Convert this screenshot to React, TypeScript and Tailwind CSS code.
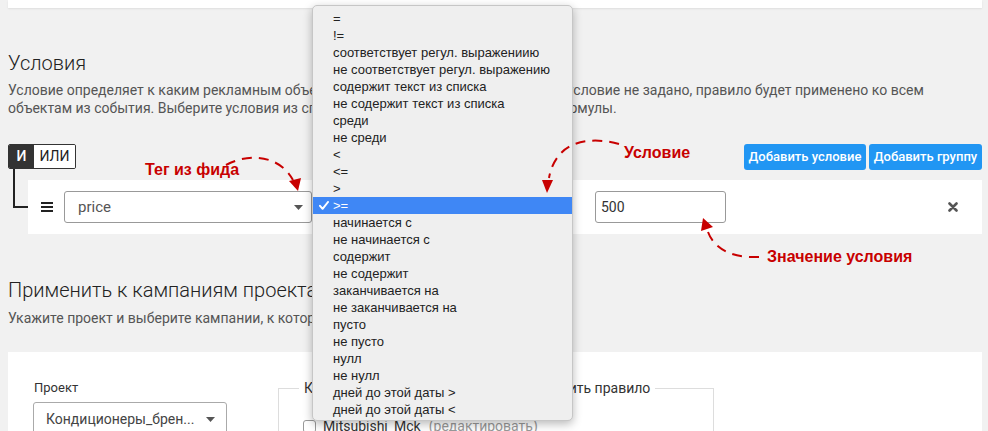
import React from 'react'

const operators = [
  '=',
  '!=',
  'соответствует регул. выражениию',
  'не соответствует регул. выражению',
  'содержит текст из списка',
  'не содержит текст из списка',
  'среди',
  'не среди',
  '<',
  '<=',
  '>',
  '>=',
  'начинается с',
  'не начинается с',
  'содержит',
  'не содержит',
  'заканчивается на',
  'не заканчивается на',
  'пусто',
  'не пусто',
  'нулл',
  'не нулл',
  'дней до этой даты >',
  'дней до этой даты <',
]

const Caret = () => (
  <svg width="9" height="5" viewBox="0 0 9 5" className="shrink-0">
    <path d="M0 0h9L4.5 5z" fill="#555" />
  </svg>
)

// выпадающий список операторов (открыт)
const OperatorMenu = ({ selected }: { selected: string }) => (
  <div className="absolute left-[312px] top-[5px] z-20 w-[261px] h-[416px] rounded-[5px] border border-[#c6c6c6] bg-[#efefef] pt-[4px] shadow-[0_3px_10px_rgba(0,0,0,0.28)] font-['Liberation_Sans',Arial,sans-serif]">
    {operators.map((op) => {
      const active = op === selected
      return (
        <div
          key={op}
          className={`relative h-[17px] pl-[20px] text-[13px] leading-[17px] whitespace-nowrap ${
            active ? 'bg-[#3f87f5] text-white' : 'text-[#222]'
          }`}
        >
          {active && (
            <svg width="10" height="9" viewBox="0 0 10 9" className="absolute left-[6px] top-[4px]">
              <path d="M1 4.8l2.6 3L9 1" fill="none" stroke="#fff" strokeWidth="2" strokeLinecap="round" strokeLinejoin="round" />
            </svg>
          )}
          {op}
        </div>
      )
    })}
  </div>
)

// красные подписи со стрелками поверх скриншота
const Annotations = () => (
  <>
    <svg
      className="pointer-events-none absolute left-0 top-0 z-30"
      width="988"
      height="431"
      viewBox="0 0 988 431"
    >
      <g fill="none" stroke="#c80000" strokeWidth="2" strokeDasharray="10 7">
        <path d="M226 165 C 250 152, 280 156, 293 180" />
        <path d="M619 144 C 590 136, 556 140, 549 178" />
        <path d="M759 257 C 730 258, 714 248, 708 232" />
      </g>
      <g fill="#c80000">
        <polygon points="289,181 301,178 298,191" />
        <polygon points="542,180 553,180 547,193" />
        <polygon points="703,218 701,231 713,227" />
      </g>
    </svg>
    <span className="absolute left-[145px] top-[160px] z-30 text-[16px] leading-[20px] font-bold text-[#c80000] font-['Liberation_Sans',Arial,sans-serif]">
      Тег из фида
    </span>
    <span className="absolute left-[624px] top-[143px] z-30 text-[16px] leading-[20px] font-bold text-[#c80000] font-['Liberation_Sans',Arial,sans-serif]">
      Условие
    </span>
    <span className="absolute left-[767px] top-[247px] z-30 text-[16px] leading-[20px] font-bold text-[#c80000] font-['Liberation_Sans',Arial,sans-serif]">
      Значение условия
    </span>
  </>
)

export default function App() {
  return (
    <div className="relative h-[431px] w-[988px] overflow-hidden bg-[#f1f1f1] pl-2 pr-[6px] font-['Roboto',sans-serif] text-[#333]">
      <div className="h-[8px] bg-white shadow-[0_1px_2px_rgba(0,0,0,0.08)]" />

      {/* Условия */}
      <h2 className="mt-[43px] text-[20px] font-light leading-[24px] text-[#222]">Условия</h2>
      <p className="mt-[6px] max-w-[930px] text-[14px] leading-[18px] text-[#555]">
        Условие определяет к каким рекламным объектам будет применено правило. Если условие не задано, правило будет применено ко всем объектам из события. Выберите условия из списка или составьте их при помощи формулы.
      </p>

      <div className="mt-[27px] flex items-start justify-between">
        <div className="flex h-[25px] overflow-hidden rounded-[2px] border border-[#333] text-[14px]">
          <span className="flex w-[25px] items-center justify-center bg-[#333] font-medium text-white">И</span>
          <span className="flex w-[41px] items-center justify-center bg-white text-[#222]">ИЛИ</span>
        </div>
        <div className="flex gap-[3px]">
          <button className="h-[26px] w-[122px] rounded-[3px] bg-[#2196f3] text-[13px] font-medium text-white">
            Добавить условие
          </button>
          <button className="h-[26px] w-[113px] rounded-[3px] bg-[#2196f3] text-[13px] font-medium text-white">
            Добавить группу
          </button>
        </div>
      </div>

      <div className="flex">
        <div className="ml-[5px] -mt-[1px] h-[39px] w-[15px] border-b-2 border-l-2 border-[#222]" />
        <div className="mt-[10px] flex h-[54px] flex-1 items-center bg-white">
          <svg width="12" height="10" viewBox="0 0 12 10" className="ml-[13px]">
            <rect y="0" width="12" height="2" fill="#222" />
            <rect y="4" width="12" height="2" fill="#222" />
            <rect y="8" width="12" height="2" fill="#222" />
          </svg>
          <div className="ml-[11px] flex h-[32px] w-[248px] items-center justify-between rounded-[3px] border border-[#999] pl-[13px] pr-[8px] text-[15px] text-[#555]">
            <span>price</span>
            <Caret />
          </div>
          <div className="ml-[10px] flex h-[32px] w-[248px] items-center rounded-[3px] border border-[#999] pl-[12px] text-[14px]">
            &gt;=
          </div>
          <div className="ml-[25px] flex h-[32px] w-[131px] items-center rounded-[3px] border border-[#999] pl-[5px] text-[14px] text-[#333]">
            500
          </div>
          <svg width="10" height="10" viewBox="0 0 10 10" className="ml-auto mr-[24px]">
            <path d="M1.5 1.5l7 7M8.5 1.5l-7 7" stroke="#555" strokeWidth="2.6" strokeLinecap="round" />
          </svg>
        </div>
      </div>

      {/* Применить к кампаниям проекта */}
      <h2 className="mt-[44px] text-[20px] font-light leading-[24px] text-[#222]">Применить к кампаниям проекта</h2>
      <p className="mt-[7px] text-[14px] leading-[18px] text-[#555]">
        Укажите проект и выберите кампании, к которым будет применено правило.
      </p>

      <div className="mt-[25px] flex h-[100px] bg-white pl-[25px] pt-[27px]">
        <div className="w-[194px]">
          <div className="pl-[1px] text-[13px] leading-[18px] text-[#333]">Проект</div>
          <div className="mt-[5px] flex h-[34px] items-center justify-between rounded-[3px] border border-[#aaa] pl-[12px] pr-[11px] text-[14px] text-[#444]">
            <span>Кондиционеры_брен...</span>
            <Caret />
          </div>
        </div>
        <fieldset className="ml-[51px] h-[80px] w-[436px] border border-[#ddd] px-[24px]">
          <legend className="ml-[-4px] px-[5px] text-[14px] leading-[18px] text-[#333]">
            Кампании, к которым требуется применить правило
          </legend>
          <div className="mt-[20px] flex items-center text-[14px] leading-[18px]">
            <span className="h-[13px] w-[13px] rounded-[3px] border border-[#999] bg-white" />
            <span className="ml-[7px] text-[#333]">Mitsubishi_Mck</span>
            <span className="ml-[8px] text-[#999]">(редактировать)</span>
          </div>
        </fieldset>
      </div>

      <OperatorMenu selected=">=" />
      <Annotations />
    </div>
  )
}
